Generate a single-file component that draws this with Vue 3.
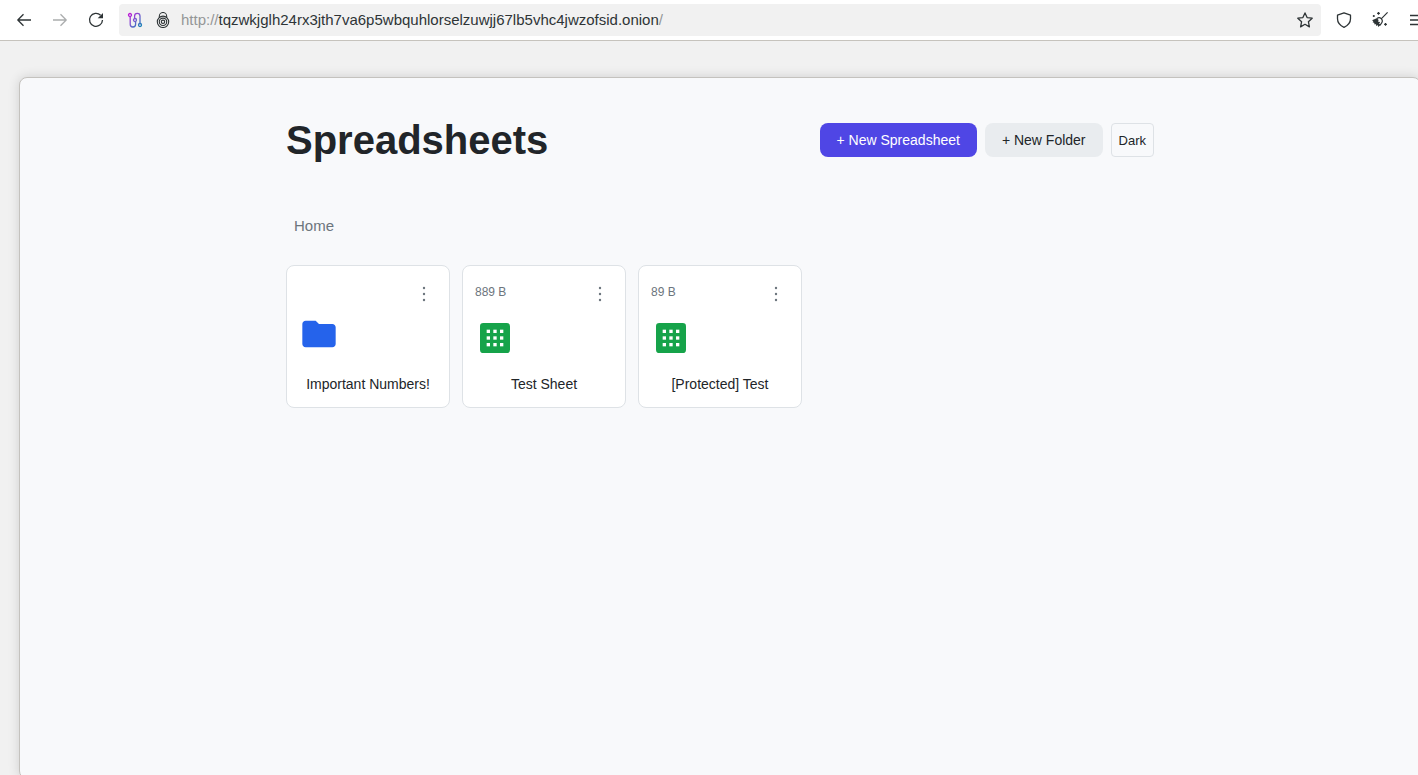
<script setup>
import { ref } from "vue";

const dark = ref(false);

const items = ref([
  { id: 1, type: "folder", name: "Important Numbers!", size: "" },
  { id: 2, type: "sheet", name: "Test Sheet", size: "889 B" },
  { id: 3, type: "sheet", name: "[Protected] Test", size: "89 B" },
]);

const cells = [7, 11, 15];

const toggleTheme = () => {
  dark.value = !dark.value;
};
</script>

<template>
  <div class="browser">
    <nav class="toolbar">
      <button class="tool" aria-label="Back">
        <svg width="16" height="16" viewBox="0 0 16 16">
          <path d="M15 8H2M7.5 2.300 1.800 8l5.700 5.700" />
        </svg>
      </button>
      <button class="tool disabled" aria-label="Forward" disabled>
        <svg width="16" height="16" viewBox="0 0 16 16">
          <path d="M1 8h13M8.500 2.300 14.200 8l-5.700 5.700" />
        </svg>
      </button>
      <button class="tool" aria-label="Reload">
        <svg width="16" height="16" viewBox="0 0 16 16">
          <path d="M12.600 3.200A6.500 6.500 0 1 0 14.500 8" />
          <path class="solid" d="M15 1v5.300H9.700z" />
        </svg>
      </button>

      <div class="address">
        <button class="circuit" aria-label="Tor circuit">
          <svg width="16" height="16" viewBox="0 0 16 16">
            <defs>
              <linearGradient id="circuit" x1="0" y1="0" x2="16" y2="16" gradientUnits="userSpaceOnUse">
                <stop offset="0.1" stop-color="#c313d8" />
                <stop offset="0.5" stop-color="#7a5bd0" />
                <stop offset="0.9" stop-color="#0f80b5" />
              </linearGradient>
            </defs>
            <g class="wire">
              <circle cx="3" cy="3" r="1.500" />
              <circle cx="8" cy="8" r="1.500" />
              <circle cx="13" cy="13" r="1.500" />
              <path d="M3.200 4.500v7.800a2.700 2.700 0 0 0 5.400 0V9.500M7.600 6.500V4a2.700 2.700 0 0 1 5.400 0v7.500" />
            </g>
          </svg>
        </button>
        <button class="onion" aria-label="Onion site">
          <svg width="16" height="16" viewBox="0 0 16 16">
            <path d="M4.300 5.600V4.200a3.700 3.700 0 0 1 7.400 0v1.400" />
            <circle cx="8" cy="9.800" r="5.700" />
            <circle cx="8" cy="9.800" r="3.700" />
            <circle cx="8" cy="9.800" r="1.700" />
          </svg>
        </button>
        <p class="url">
          <span class="faded">http://</span>tqzwkjglh24rx3jth7va6p5wbquhlorselzuwjj67lb5vhc4jwzofsid.onion<span class="faded">/</span>
        </p>
        <button class="star" aria-label="Bookmark">
          <svg width="16" height="16" viewBox="0 0 16 16">
            <path d="M8 .9l2.100 4.700 5.100.6-3.800 3.500 1 5.200L8 12.300l-4.400 2.600 1-5.200L.8 6.200l5.100-.6z" />
          </svg>
        </button>
      </div>

      <button class="tool" aria-label="Security level">
        <svg width="16" height="16" viewBox="0 0 16 16">
          <path d="M8 .8 14.500 3.200v3.600c0 3.500-2.500 6.700-6.500 8.500C4 13.500 1.500 10.300 1.500 6.800V3.200z" />
        </svg>
      </button>
      <button class="tool" aria-label="New identity">
        <svg width="16" height="16" viewBox="0 0 16 16">
          <path class="spark" d="M15.600.400 9.200 6.800M4.800 6.600c1.700-1.400 3.200-1.200 4.400 0 1.300 1.300 1.500 3 .2 4.700L7.600 13.500" />
          <path
            class="solid"
            d="M4.800 6.200 0 8.300l1.400 1-.8 1 1.900.7-.4 1.300 2-.1-.1 1.700 1.600-.8.700 1.900 2.300-2.300-1.500-1 1.100-1.600-2.100-.4.500-1.700z"
          />
          <path class="spark" d="M6.500 0v2.800M5.100 1.400h2.800M1.800 3v2M.8 4h2M13.500 11v2.800M12.100 12.400h2.800" />
        </svg>
      </button>
      <button class="tool" aria-label="Menu">
        <svg width="16" height="16" viewBox="0 0 16 16">
          <path d="M2 3.500h14M2 8h14M2 12.500h14" />
        </svg>
      </button>
    </nav>

    <main class="viewport">
      <div class="container">
        <header class="header">
          <h1>Spreadsheets</h1>
          <div class="actions">
            <button class="btn primary">+ New Spreadsheet</button>
            <button class="btn secondary">+ New Folder</button>
            <button class="btn theme" @click="toggleTheme">{{ dark ? "Light" : "Dark" }}</button>
          </div>
        </header>

        <nav class="breadcrumb">
          <a href="#">Home</a>
        </nav>

        <section class="grid">
          <article v-for="item in items" :key="item.id" class="card">
            <div class="card-top">
              <span class="size">{{ item.size }}</span>
              <button class="more" :aria-label="'Options for ' + item.name">
                <svg width="4" height="16" viewBox="0 0 4 16">
                  <circle cx="2" cy="2" r="1.200" />
                  <circle cx="2" cy="8" r="1.200" />
                  <circle cx="2" cy="14" r="1.200" />
                </svg>
              </button>
            </div>
            <div class="thumb" :class="item.type">
              <svg v-if="item.type === 'folder'" width="40" height="40" viewBox="0 0 24 24">
                <path
                  fill="#2563eb"
                  d="M10 4H4c-1.100 0-2 .9-2 2v12c0 1.100.9 2 2 2h16c1.100 0 2-.9 2-2V8c0-1.100-.9-2-2-2h-8z"
                />
              </svg>
              <svg v-else width="40" height="40" viewBox="0 0 24 24">
                <rect x="3" y="3" width="18" height="18" rx="2" fill="#16a34a" />
                <template v-for="y in cells" :key="y">
                  <rect v-for="x in cells" :key="x" :x="x" :y="y" width="2" height="2" fill="#fff" />
                </template>
              </svg>
            </div>
            <a href="#" class="name">{{ item.name }}</a>
          </article>
        </section>
      </div>
    </main>
  </div>
</template>

<style>
body {
  background: #f1f1f1;
}
</style>

<style scoped>
.browser {
  display: flex;
  flex-direction: column;
  height: 100vh;
  overflow: hidden;
  background: #f1f1f1;
  color: #212529;
  font-family: "Liberation Sans", Arial, sans-serif;
}

button {
  padding: 0;
  border: none;
  background: transparent;
  color: inherit;
  font-family: inherit;
  cursor: pointer;
}

a {
  color: inherit;
  text-decoration: none;
}

svg {
  display: block;
}

.toolbar {
  display: flex;
  align-items: center;
  margin-right: -16px;
  padding: 4px 0 4px 6px;
  background: #fff;
  border-bottom: 1px solid #c6c3bd;
}

.tool {
  display: flex;
  justify-content: center;
  flex: none;
  width: 36px;
}

.disabled {
  opacity: 0.4;
}

.toolbar svg {
  fill: none;
  stroke: #2e3436;
  stroke-width: 1.3;
  stroke-linejoin: round;
}

.toolbar .solid {
  fill: #2e3436;
  stroke: none;
}

.toolbar .spark {
  stroke-width: 1.2;
}

.toolbar .wire {
  stroke: url(#circuit);
}

.toolbar .onion svg {
  stroke-width: 1.1;
}

.address {
  display: flex;
  align-items: center;
  flex: 1;
  min-width: 0;
  height: 32px;
  margin: 0 5px;
  padding: 0 8px;
  background: #f1f1f1;
  border-radius: 4px;
}

.onion {
  margin: 0 10px 0 12px;
}

.url {
  flex: 1;
  margin: 0;
  font-size: 15px;
  line-height: 18px;
  white-space: nowrap;
  color: #2e3436;
}

.faded {
  color: #949697;
}

.viewport {
  flex: 1;
  margin: 36px -3px -4px 19px;
  background: #f8f9fb;
  border: 1px solid #c4c2be;
  border-radius: 8px;
  box-shadow: 0 0 12px rgba(0, 0, 0, 0.14);
}

.container {
  max-width: 868px;
  margin: 0 auto;
  padding: 38px 16px;
}

.header {
  display: flex;
  justify-content: space-between;
  align-items: center;
}

h1 {
  margin: 0;
  font-size: 40px;
  line-height: 48px;
}

.actions {
  display: flex;
  gap: 8px;
}

.btn {
  height: 34px;
  padding: 0 17px;
  border-radius: 8px;
  font-size: 14px;
}

.primary {
  background: #4f46e5;
  color: #fff;
}

.secondary {
  background: #e9ecef;
}

.theme {
  padding: 0 7px;
  border: 1px solid #dee2e6;
  border-radius: 4px;
  font-size: 13px;
}

.breadcrumb {
  margin: 52px 0 29px;
  padding: 0 8px;
  font-size: 15px;
  line-height: 20px;
  color: #6c757d;
}

.grid {
  display: grid;
  grid-template-columns: repeat(auto-fill, minmax(150px, 1fr));
  gap: 12px;
}

.card {
  display: flex;
  flex-direction: column;
  padding: 12px;
  background: #fff;
  border: 1px solid #dee2e6;
  border-radius: 8px;
}

.card-top {
  display: flex;
  justify-content: space-between;
  height: 32px;
  color: #6c757d;
}

.size {
  font-size: 12px;
  line-height: 28px;
}

.more {
  display: flex;
  justify-content: center;
  align-items: center;
  width: 26px;
}

.more svg {
  fill: #6c757d;
}

.thumb {
  height: 44px;
  padding-top: 8px;
}

.thumb.folder {
  height: 48px;
  padding-top: 4px;
}

.name {
  margin-top: 12px;
  font-size: 14px;
  line-height: 21px;
  text-align: center;
}
</style>
